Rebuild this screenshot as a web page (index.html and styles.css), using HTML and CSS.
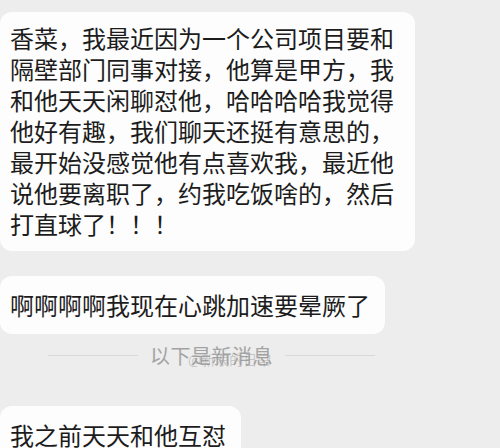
FILE: index.html
```html
<!DOCTYPE html>
<html lang="zh">

<head>
    <meta charset="UTF-8">
    <meta name="viewport" content="width=device-width, initial-scale=1.0">
    <title>聊天记录</title>
    <link rel="stylesheet" href="styles.css">
</head>

<body>
    <div class="chat">
        <div class="bubble bubble-long">
            香菜，我最近因为一个公司项目要和隔壁部门同事对接，他算是甲方，我和他天天闲聊怼他，哈哈哈哈我觉得他好有趣，我们聊天还挺有意思的，最开始没感觉他有点喜欢我，最近他说他要离职了，约我吃饭啥的，然后打直球了！！！
        </div>

        <div class="bubble">啊啊啊啊我现在心跳加速要晕厥了</div>

        <div class="divider">
            <span class="divider-line"></span>
            <span class="divider-text">以下是新消息</span>
            <span class="divider-line"></span>
            <span class="watermark">@新浪的日常</span>
        </div>

        <div class="bubble">我之前天天和他互怼</div>
    </div>
</body>

</html>
```

FILE: styles.css
```css
:root {
    --color-bg: #ededed;
    --color-bubble: #fdfdfd;
    --color-text: #1c1c1c;
    --color-muted: #a3a3a3;
    --color-line: #d9d9d9;
}

body {
    font-family: "Noto Sans CJK SC", "Noto Sans", sans-serif;
    background-color: var(--color-bg);
    margin: 0;
    padding: 0;
    overflow: hidden;
}

.chat {
    display: flex;
    flex-direction: column;
    align-items: flex-start;
    padding-top: 12px;
}

.bubble {
    background-color: var(--color-bubble);
    color: var(--color-text);
    font-size: 24px;
    line-height: 31px;
    padding: 13px 15px 14px 10px;
    border-radius: 12px;
    margin-bottom: 25px;
}

.bubble-long {
    width: 390px;
    padding-top: 10px;
    padding-bottom: 12px;
}

.divider {
    position: relative;
    display: flex;
    align-items: center;
    gap: 12px;
    width: 327px;
    margin: -19px 0 36px 48px;
    height: 30px;
}

.divider-line {
    flex: 1;
    height: 1px;
    background-color: var(--color-line);
}

.divider-text {
    font-size: 20px;
    color: var(--color-muted);
    letter-spacing: 0.5px;
}

.watermark {
    position: absolute;
    left: 140px;
    top: 9px;
    font-size: 14px;
    color: rgba(150, 150, 150, 0.45);
    white-space: nowrap;
}
```
